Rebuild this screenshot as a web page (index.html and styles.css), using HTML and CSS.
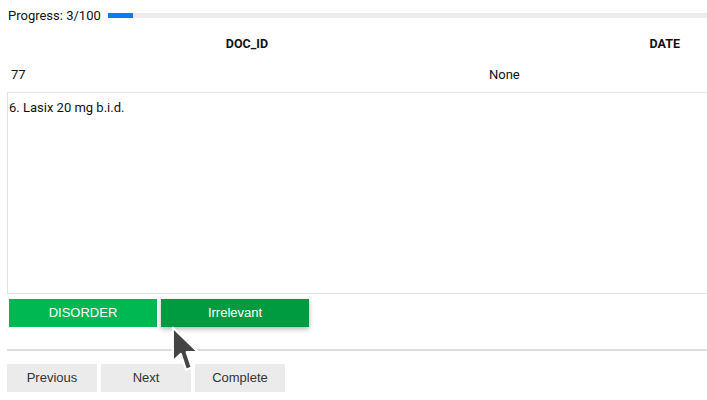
FILE: index.html
```html
<!DOCTYPE html>
<html>
<head>
<meta charset="utf-8">
<link rel="stylesheet" href="styles.css">
</head>
<body>
<div class="page">
  <div class="progress">
    <span class="progress-label">Progress: 3/100</span>
    <div class="bar"><div class="bar-fill" style="width:25px"></div></div>
  </div>
  <div class="thead">
    <div class="col-id">DOC_ID</div>
    <div class="col-date">DATE</div>
  </div>
  <div class="trow">
    <div class="cell-id">77</div>
    <div class="cell-date">None</div>
  </div>
  <div class="textbox">6. Lasix 20 mg b.i.d.</div>
  <div class="labels">
    <button class="label label-disorder">DISORDER</button>
    <button class="label label-irrelevant">Irrelevant</button>
  </div>
  <hr class="divider">
  <div class="nav">
    <button class="nav-btn">Previous</button>
    <button class="nav-btn">Next</button>
    <button class="nav-btn">Complete</button>
  </div>
  <svg class="cursor" width="30" height="50" viewBox="0 0 26 44">
    <path d="M1.5 1.5 L1.5 31 L8.5 24.5 L13 38.5 L18 36.5 L13.5 23 L23.5 23 Z" fill="#444" stroke="#fff" stroke-width="1.8" stroke-linejoin="round"/>
  </svg>
</div>
</body>
</html>
```
FILE: styles.css
```css
html, body {
  margin: 0;
  padding: 0;
  overflow: hidden;
  background: #fff;
}
body {
  font-family: Roboto, "Liberation Sans", sans-serif;
  font-size: 13px;
  color: #111;
}
.page {
  position: relative;
  width: 707px;
  height: 400px;
}
.progress {
  display: flex;
  align-items: center;
  height: 30px;
  padding-left: 8px;
}
.progress-label {
  width: 100px;
}
.bar {
  flex: 1;
  height: 5px;
  background: #ebebeb;
}
.bar-fill {
  height: 100%;
  background: #0a7cf0;
}
.thead {
  display: flex;
  align-items: center;
  height: 27px;
  font-weight: bold;
  font-size: 12.5px;
}
.col-id {
  width: 494px;
  text-align: center;
}
.col-date {
  flex: 1;
  text-align: right;
  padding-right: 27px;
}
.trow {
  display: flex;
  align-items: center;
  height: 35px;
}
.cell-id {
  width: 478px;
  padding-left: 11px;
}
.cell-date {
  flex: 1;
}
.textbox {
  margin-left: 7px;
  border: 1px solid #e2e2e2;
  border-right: none;
  padding: 7px 1px;
  box-sizing: border-box;
  height: 202px;
  line-height: 15px;
}
.labels {
  display: flex;
  gap: 4px;
  margin: 5px 0 0 9px;
}
.label {
  width: 148px;
  height: 28px;
  border: none;
  color: #fff;
  font-family: "Liberation Sans", Arial, sans-serif;
  font-size: 13px;
  padding: 0 0 1px;
}
.label-disorder {
  background: #00b852;
}
.label-irrelevant {
  background: #009b40;
  box-shadow: 0 2px 5px rgba(0,0,0,0.3);
}
.divider {
  margin: 22px 0 0 7px;
  border: none;
  height: 2px;
  background: #dddddd;
}
.nav {
  display: flex;
  gap: 4px;
  margin: 13px 0 0 7px;
}
.nav-btn {
  width: 90px;
  height: 28px;
  border: none;
  background: #ebebeb;
  color: #333;
  font-family: "Liberation Sans", Arial, sans-serif;
  font-size: 13px;
  padding: 0 0 1px;
}
.cursor {
  position: absolute;
  left: 171px;
  top: 326px;
}
```
